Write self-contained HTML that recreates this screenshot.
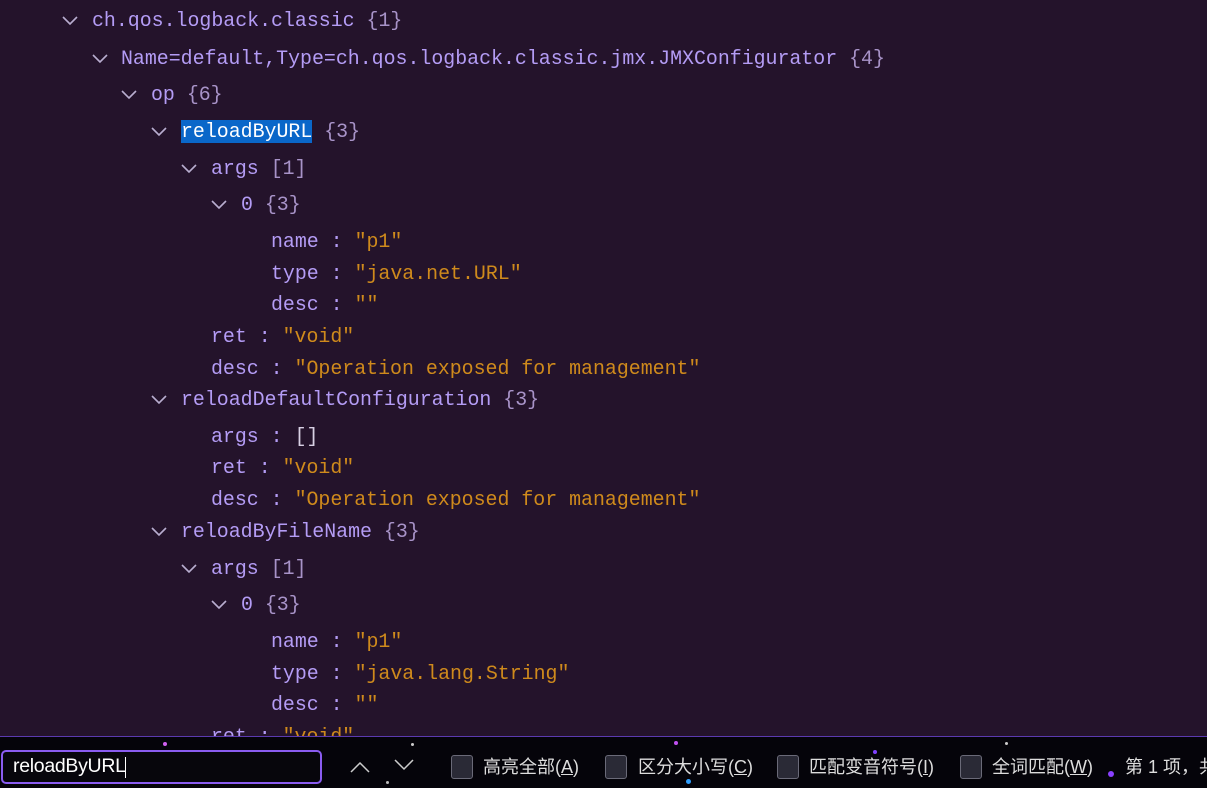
<!DOCTYPE html>
<html><head><meta charset="utf-8"><style>
html,body{margin:0;padding:0;}
body{width:1207px;height:787px;background:#24132b;position:relative;overflow:hidden;font-family:"Liberation Mono",monospace;}
.r{position:absolute;font-size:19.9px;line-height:24px;color:#b49cf5;white-space:pre;}
.b{color:#a893c8;}
.s{color:#cf8a1c;}
.w{color:#d8d0e4;}
.hl{background:#0a67c9;color:#fff;}
.cv{position:absolute;width:18px;height:12px;}
.bar{position:absolute;left:0;top:736px;width:1207px;height:51px;background:#05040a;border-top:1px solid #5b3ab0;}
.inp{position:absolute;left:1px;top:750px;width:317px;height:30px;border:2px solid #8a5cf0;border-radius:5px;background:#07060c;}
.inp span{position:absolute;left:10px;top:3px;font:19.5px "Liberation Sans","Noto Sans CJK SC",sans-serif;color:#fff;letter-spacing:-0.3px;}
.inp i{position:absolute;left:122px;top:5px;width:1px;height:21px;background:#fff;}
.ck{position:absolute;top:755px;width:20px;height:22px;border:1px solid #6a6a78;border-radius:3px;background:#2a2a36;}
.lb{position:absolute;top:755px;font:18px "Liberation Sans","Noto Sans CJK SC",sans-serif;color:#ddd;line-height:24px;white-space:pre;}
.lb u{text-decoration:underline;}
.st{position:absolute;border-radius:50%;}
</style></head><body>
<svg width="0" height="0" style="position:absolute"><defs><symbol id="c" viewBox="0 0 18 12"><path d="M2 2 L9 9 L16 2" fill="none" stroke="#b9aed0" stroke-width="1.6"/></symbol></defs></svg>

<svg class="cv" style="left:61px;top:15px"><use href="#c"/></svg>
<div class="r" style="left:92px;top:9px">ch.qos.logback.classic <span class="b">{1}</span></div>
<svg class="cv" style="left:91px;top:53px"><use href="#c"/></svg>
<div class="r" style="left:121px;top:47px">Name=default,Type=ch.qos.logback.classic.jmx.JMXConfigurator <span class="b">{4}</span></div>
<svg class="cv" style="left:120px;top:89px"><use href="#c"/></svg>
<div class="r" style="left:151px;top:83px">op <span class="b">{6}</span></div>
<svg class="cv" style="left:150px;top:126px"><use href="#c"/></svg>
<div class="r" style="left:181px;top:120px"><span class="hl">reloadByURL</span> <span class="b">{3}</span></div>
<svg class="cv" style="left:180px;top:163px"><use href="#c"/></svg>
<div class="r" style="left:211px;top:157px">args <span class="b">[1]</span></div>
<svg class="cv" style="left:210px;top:199px"><use href="#c"/></svg>
<div class="r" style="left:241px;top:193px">0 <span class="b">{3}</span></div>
<div class="r" style="left:271px;top:230px">name : <span class="s">"p1"</span></div>
<div class="r" style="left:271px;top:262px">type : <span class="s">"java.net.URL"</span></div>
<div class="r" style="left:271px;top:293px">desc : <span class="s">""</span></div>
<div class="r" style="left:211px;top:325px">ret : <span class="s">"void"</span></div>
<div class="r" style="left:211px;top:357px">desc : <span class="s">"Operation exposed for management"</span></div>
<svg class="cv" style="left:150px;top:394px"><use href="#c"/></svg>
<div class="r" style="left:181px;top:388px">reloadDefaultConfiguration <span class="b">{3}</span></div>
<div class="r" style="left:211px;top:425px">args : <span class="w">[]</span></div>
<div class="r" style="left:211px;top:456px">ret : <span class="s">"void"</span></div>
<div class="r" style="left:211px;top:488px">desc : <span class="s">"Operation exposed for management"</span></div>
<svg class="cv" style="left:150px;top:526px"><use href="#c"/></svg>
<div class="r" style="left:181px;top:520px">reloadByFileName <span class="b">{3}</span></div>
<svg class="cv" style="left:180px;top:563px"><use href="#c"/></svg>
<div class="r" style="left:211px;top:557px">args <span class="b">[1]</span></div>
<svg class="cv" style="left:210px;top:599px"><use href="#c"/></svg>
<div class="r" style="left:241px;top:593px">0 <span class="b">{3}</span></div>
<div class="r" style="left:271px;top:630px">name : <span class="s">"p1"</span></div>
<div class="r" style="left:271px;top:662px">type : <span class="s">"java.lang.String"</span></div>
<div class="r" style="left:271px;top:693px">desc : <span class="s">""</span></div>
<div class="r" style="left:211px;top:725px">ret : <span class="s">"void"</span></div>

<div class="bar"></div>
<div class="st" style="left:163px;top:742px;width:4px;height:4px;background:#d060f0"></div>
<div class="st" style="left:411px;top:743px;width:3px;height:3px;background:#ccc"></div>
<div class="st" style="left:674px;top:741px;width:4px;height:4px;background:#c050f0"></div>
<div class="st" style="left:873px;top:750px;width:4px;height:4px;background:#8040ff"></div>
<div class="st" style="left:1108px;top:771px;width:6px;height:6px;background:#8a40ff"></div>
<div class="st" style="left:686px;top:779px;width:5px;height:5px;background:#30a0ff"></div>
<div class="st" style="left:386px;top:781px;width:3px;height:3px;background:#bbb"></div>
<div class="st" style="left:1005px;top:742px;width:3px;height:3px;background:#ccc"></div>
<div class="inp"><span>reloadByURL</span><i></i></div>
<svg style="position:absolute;left:349px;top:760px" width="22" height="14"><path d="M2 12 L11 3 L20 12" fill="none" stroke="#ccc" stroke-width="1.5"/></svg>
<svg style="position:absolute;left:393px;top:758px" width="22" height="14"><path d="M2 2 L11 11 L20 2" fill="none" stroke="#ccc" stroke-width="1.5"/></svg>
<div class="ck" style="left:451px"></div><div class="lb" style="left:483px">高亮全部(<u>A</u>)</div>
<div class="ck" style="left:605px"></div><div class="lb" style="left:638px">区分大小写(<u>C</u>)</div>
<div class="ck" style="left:777px"></div><div class="lb" style="left:809px">匹配变音符号(<u>I</u>)</div>
<div class="ck" style="left:960px"></div><div class="lb" style="left:992px">全词匹配(<u>W</u>)</div>
<div class="lb" style="left:1125px">第 1 项，共</div>
</body></html>
